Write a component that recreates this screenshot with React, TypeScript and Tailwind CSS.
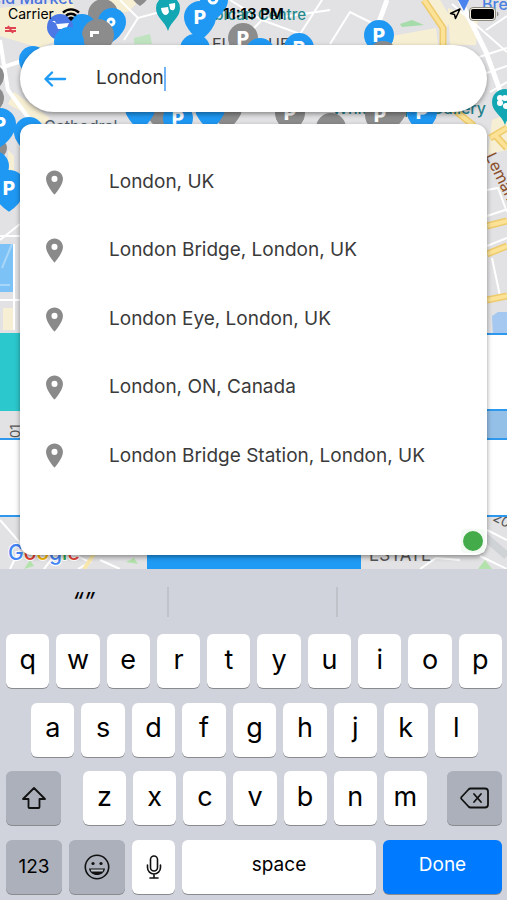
import { useState } from 'react'
import type { ReactNode } from 'react'
import { Navigation } from 'lucide-react'
import { MdPlace } from 'react-icons/md'
import clsx from 'clsx'

const suggestions = [
  'London, UK',
  'London Bridge, London, UK',
  'London Eye, London, UK',
  'London, ON, Canada',
  'London Bridge Station, London, UK',
]

interface PinProps {
  x: number
  y: number
  r?: number
  color?: string
  label?: boolean
}

const BLUE = '#1f98f3'
const GRAY = '#8c8c8c'

function Pin({ x, y, r = 15, color = BLUE, label = false }: PinProps) {
  return (
    <g transform={`translate(${x} ${y})`}>
      <circle r={r} fill={color} />
      <path
        d={`M${-r * 0.92} ${r * 0.4}Q${-r * 0.6} ${r * 1.1} 0 ${r * 1.45}Q${r * 0.6} ${r * 1.1} ${r * 0.92} ${r * 0.4}Z`}
        fill={color}
      />
      {label && (
        <text y={r * 0.45} textAnchor="middle" fontSize="19" fontWeight="800" fill="#fff">
          P
        </text>
      )}
    </g>
  )
}

function MapView() {
  return (
    <svg
      viewBox="0 0 507 569"
      preserveAspectRatio="xMidYMid slice"
      className="absolute inset-0 h-full w-full font-[Inter,sans-serif]"
      aria-hidden="true"
    >
      <rect width="507" height="569" fill="#e2e2e4" />

      {/* blocks */}
      <g fill="#f7efd3">
        <path d="M0 8L72 0L80 30L40 48L0 36Z" />
        <path d="M14 92L50 118L44 124L8 104Z" />
        <path d="M98 0H140L128 12H112Z" />
        <path d="M392 36L436 28L438 46H390Z" />
        <path d="M448 8L478 18L476 45H450Z" />
        <path d="M424 0H440L452 20L446 28Z" />
        <path d="M8 150L14 156V172H8Z" />
        <path d="M3 308H14V330H3Z" />
        <path d="M492 120L507 114V150L488 154Z" />
      </g>
      <path d="M134 38L150 34L152 44H134Z" fill="#bfe3bf" />
      <path d="M400 24L412 20L424 25L402 27Z" fill="#a5dcaa" />
      <path d="M0 244H15V292H0Z" fill="#7dc2f6" />
      <path d="M2 268L12 244M0 285H10" stroke="#a8d6f8" strokeWidth="2" />
      <path d="M492 316L498 312H507V336H493Z" fill="#a4c8f0" />

      {/* streets */}
      <g fill="none" stroke="#fff" strokeWidth="2">
        <path d="M0 40L8 90L30 120M0 68L50 52" strokeWidth="4" />
        <path d="M120 0L138 18L160 12M138 18L124 40M230 0L262 20L330 10M262 20L300 34L322 0M262 20L242 40M330 44L350 12L374 24" />
        <path d="M387 0L376 30" strokeWidth="5" />
        <path d="M460 0L486 52L507 110" strokeWidth="5" />
        <path d="M452 4L507 52M470 60L507 48M478 76L507 66M490 92L507 82M486 30L507 16" />
        <path d="M0 240L20 224M0 236H20M14 244V330M0 300H20" />
        <path d="M487 190L498 188L507 212M487 216L505 210M492 258L500 296M487 246L507 238" />
        <path d="M0 520L22 545L10 569M22 545L40 516M44 569L60 548L90 562L78 569M100 560L120 569M420 569L436 558L460 560M487 530L507 540M480 556L507 569" />
      </g>
      <path d="M484 536L507 556" stroke="#d0d3d6" strokeWidth="8" />
      <g fill="none">
        <path d="M424 0L443 28V46M452 108L474 126M490 138L507 128M494 134L507 148M487 226L507 221M487 254L507 246M487 300L507 296" stroke="#eecb6c" strokeWidth="7" />
        <path d="M424 0L443 28V46M452 108L474 126M490 138L507 128M494 134L507 148M487 226L507 221M487 254L507 246M487 300L507 296" stroke="#fbe297" strokeWidth="4" />
        <path d="M84 569L98 548" stroke="#f8e7ac" strokeWidth="4" />
      </g>
      <path d="M24 569L30 560L34 566ZM478 569L485 560L492 569ZM126 562L134 558L138 564Z" fill="#b4e2ac" />

      {/* labels */}
      <text x="73" y="4" fontSize="16" fontWeight="500" fill="#4a72dc" textAnchor="end">Smithfield Market</text>
      <text x="306" y="20" fontSize="15" fontWeight="500" fill="#23898d" textAnchor="end">Barbican Centre</text>
      <text x="486" y="114" fontSize="16" fontWeight="500" fill="#23808a" textAnchor="end">Whitechapel Gallery</text>
      <text x="482" y="10" fontSize="16" fontWeight="500" fill="#4a80e0">Brewery</text>
      <text x="44" y="132" fontSize="16" fill="#50606e">Cathedral</text>
      <text x="212" y="50" fontSize="16" fill="#444">EL</text>
      <text x="268" y="50" fontSize="16" fill="#444">UE</text>
      <text fontSize="16" fill="#8a4f28" transform="translate(485 156) rotate(64)">Leman St</text>
      <text fontSize="13" fill="#555" transform="translate(20 446) rotate(-90)">201</text>
      <text fontSize="14" fill="#555" transform="translate(492 520) rotate(28)">20</text>
      <text x="369" y="561" fontSize="17" fill="#555">ESTATE</text>
      <path d="M5 28H16M5 31H16M8 26L13 33" stroke="#e14553" strokeWidth="2" fill="none" />

      {/* parking pins */}
      <Pin x={103} y={14} color={GRAY} />
      <Pin x={82} y={29} />
      <Pin x={112} y={22} r={14} />
      <circle cx="111" cy="22" r="3" fill="none" stroke="#fff" strokeWidth="3" />
      <circle cx="60" cy="27" r="13" fill="#4c78e6" />
      <path d="M52 21H55L58 29H66L69 23L57 24Z" fill="#fff" />
      <Pin x={98} y={35} r={16} color={GRAY} />
      <path d="M90 31H99V34H93V37H90Z" fill="#fff" />
      <Pin x={69} y={42} />
      <Pin x={33} y={60} r={14} />
      <Pin x={-8} y={76} color={GRAY} r={12} />
      <Pin x={-8} y={98} color={GRAY} r={12} />
      <Pin x={140} y={-10} color={GRAY} r={11} />
      <Pin x={214} y={0} r={14} />
      <circle cx="213" cy="-1" r="4" fill="none" stroke="#fff" strokeWidth="3" />
      <Pin x={195} y={49} r={15} />
      <Pin x={200} y={17} r={16} label />
      <Pin x={243} y={38} color={GRAY} label />
      <Pin x={260} y={53} />
      <Pin x={299} y={48} label />
      <Pin x={379} y={35} label />
      <Pin x={383} y={56} color={GRAY} />
      <path d="M457 -2H470L464 11Z" fill="#4b83ef" />
      <Pin x={160} y={108} color={GRAY} />
      <Pin x={140} y={108} />
      <Pin x={227} y={108} color={GRAY} />
      <Pin x={210} y={108} />
      <Pin x={178} y={118} label />
      <Pin x={290} y={113} color={GRAY} label />
      <Pin x={331} y={128} color={GRAY} />
      <Pin x={392} y={108} color={GRAY} />
      <Pin x={380} y={115} color={GRAY} label />
      <Pin x={422} y={112} label />
      <Pin x={-2} y={148} r={9} color={GRAY} />
      <Pin x={0} y={124} r={16} label />
      <Pin x={29} y={132} r={15} />
      <Pin x={-6} y={166} />
      <Pin x={9} y={187} r={17} label />

      {/* theatres */}
      <path d="M168 31C165 21 156 18 156 8A12 12 0 0 1 180 8C180 18 171 21 168 31Z" fill="#13a6b3" />
      <path d="M161 8L168 7L169 12C167 17 162 16 161 8ZM169 4L175 3C176 10 173 12 170 9Z" fill="#fff" />
      <path d="M505 125C502 115 492 112 492 102A13 13 0 0 1 518 102C518 112 508 115 505 125Z" fill="#13a6b3" />
      <g fill="#fff">
        <circle cx="500" cy="98" r="3" />
        <circle cx="505" cy="98" r="3" />
        <circle cx="500" cy="103" r="3" />
        <circle cx="506" cy="106" r="3" />
      </g>

      {/* attribution */}
      <text x="8" y="560" fontSize="21" fontWeight="500" stroke="#fff" strokeWidth="2" paintOrder="stroke">
        <tspan fill="#4285f4">G</tspan>
        <tspan fill="#ea4335">o</tspan>
        <tspan fill="#fbbc05">o</tspan>
        <tspan fill="#4285f4">g</tspan>
        <tspan fill="#34a853">l</tspan>
        <tspan fill="#ea4335">e</tspan>
      </text>
    </svg>
  )
}

// Booking cards that lie between the map and the search sheet
function BackgroundCards() {
  return (
    <div className="absolute inset-0 flex flex-col pt-[333px]" aria-hidden="true">
      <div className="flex h-[78px]">
        <div className="flex-1 bg-[#2bc8cd]" />
        <div className="flex-1 border-y-2 border-[#2d98ee] bg-white" />
      </div>
      <div className="flex h-[27px]">
        <div className="flex-1" />
        <div className="flex-1 bg-[#94bfe6]" />
      </div>
      <div className="h-[79px] border-y-2 border-[#2d98ee] bg-white" />
      <div className="mt-auto ml-[29%] h-9 w-[214px] bg-[#1f9bf5]" />
    </div>
  )
}

function StatusBar() {
  return (
    <header className="relative grid h-7 grid-cols-3 items-center px-2 text-sm text-black">
      <div className="flex items-center gap-2">
        <span>Carrier</span>
        <svg viewBox="0 0 18 13" className="h-[13px] w-[18px]" role="img" aria-label="Wi-Fi">
          <g fill="none" stroke="#000" strokeWidth="2.4">
            <path d="M1 4.6A11.5 11.5 0 0 1 17 4.6" />
            <path d="M4 7.7A7.4 7.4 0 0 1 14 7.7" />
          </g>
          <path d="M9 13L6 9.9A4.4 4.4 0 0 1 12 9.9Z" fill="#000" />
        </svg>
      </div>
      <time className="text-center text-[15px] font-semibold">11:13 PM</time>
      <div className="flex items-center justify-end gap-2">
        <Navigation className="size-3" strokeWidth={3} aria-label="Location in use" />
        <svg viewBox="0 0 30 14" className="h-[14px] w-[30px]" role="img" aria-label="Battery full">
          <rect x="0.5" y="0.5" width="26" height="13" rx="3.5" fill="#f4f0e4" stroke="#8d8a82" />
          <rect x="2" y="2" width="23" height="10" rx="2" fill="#000" />
          <path d="M28 4.5C30 5.5 30 8.5 28 9.5Z" fill="#8d8a82" />
        </svg>
      </div>
    </header>
  )
}

interface SearchBarProps {
  value: string
  onChange: (value: string) => void
}

function SearchBar({ value, onChange }: SearchBarProps) {
  return (
    <form
      onSubmit={(e) => e.preventDefault()}
      className="flex h-[67px] items-center rounded-full bg-white pl-6 shadow-[0_2px_5px_rgba(0,0,0,0.4)]"
    >
      <button type="button" aria-label="Back" className="text-[#1f9bf5]">
        <svg viewBox="0 0 24 24" className="size-6" fill="none" stroke="currentColor" strokeWidth="2.4" strokeLinecap="round" strokeLinejoin="round">
          <path d="M21 12H2M8 5.5L1.5 12L8 18.5" />
        </svg>
      </button>
      <input
        type="text"
        aria-label="Search location"
        value={value}
        onChange={(e) => onChange(e.target.value)}
        className="ml-7 field-sizing-content text-[19px] text-[#333] caret-transparent outline-none"
      />
      <span className="h-6 w-[2px] bg-[#6fb4f7]" />
    </form>
  )
}

function SuggestionPanel({ onSelect }: { onSelect: (value: string) => void }) {
  return (
    <div className="relative mt-3 flex-1 rounded-xl bg-white pt-6 pb-16 shadow-[0_2px_5px_rgba(0,0,0,0.4)]">
      <ul className="flex h-[342px] flex-col">
        {suggestions.map((name) => (
          <li key={name} className="flex-1">
            <button
              type="button"
              onClick={() => onSelect(name)}
              className="flex h-full w-full items-center gap-10 pl-5 text-left text-[19px] text-[#3a3a3a]"
            >
              <MdPlace className="size-[29px] text-[#8a8a8a]" />
              <span>{name}</span>
            </button>
          </li>
        ))}
      </ul>
      <span className="absolute right-[2px] bottom-[2px] grid size-6 place-items-center rounded bg-[#f3faf3]">
        <span className="size-5 rounded-full bg-[#43ab4a]" />
      </span>
    </div>
  )
}

interface KeyProps {
  children: ReactNode
  label?: string
  className?: string
  onClick?: () => void
}

function Key({ children, label, className = 'flex-1 bg-white pb-1 text-[27px]', onClick }: KeyProps) {
  return (
    <button
      type="button"
      aria-label={label}
      onClick={onClick}
      className={clsx(
        'flex h-[54px] items-center justify-center rounded-md leading-none shadow-[0_1px_0_#898b8f]',
        className,
      )}
    >
      {children}
    </button>
  )
}

function Keyboard({ onType, onDelete }: { onType: (char: string) => void; onDelete: () => void }) {
  const letters = (row: string) =>
    row.split('').map((char) => (
      <Key key={char} onClick={() => onType(char)}>
        {char}
      </Key>
    ))

  return (
    <section aria-label="Keyboard" className="bg-[#d0d3db] pb-[6px] text-black">
      <div className="grid h-[65px] grid-cols-3 items-center divide-x-2 divide-[#bfc2c9]">
        <button type="button" className="h-[30px] text-2xl leading-7 italic">
          “”
        </button>
        <span className="h-[30px]" />
        <span className="h-[30px]" />
      </div>
      <div className="flex h-[260px] flex-col justify-between">
        <div className="flex gap-[7px] pr-[5px] pl-[6px]">{letters('qwertyuiop')}</div>
        <div className="flex gap-[7px] pr-[29px] pl-[31px]">{letters('asdfghjkl')}</div>
        <div className="flex justify-between pr-[5px] pl-[6px]">
          <Key label="Shift" className="w-[55px] bg-[#abb0bb]">
            <svg viewBox="0 0 26 24" className="h-6 w-[26px]" fill="none" stroke="#111" strokeWidth="1.8" strokeLinejoin="round">
              <path d="M13 2L24 13H18.5V21Q18.5 22 17.5 22H8.5Q7.5 22 7.5 21V13H2Z" />
            </svg>
          </Key>
          <div className="mr-5 ml-[22px] flex flex-1 gap-[7px]">{letters('zxcvbnm')}</div>
          <Key label="Delete" onClick={onDelete} className="w-[55px] bg-[#abb0bb]">
            <svg viewBox="0 0 30 22" className="h-[22px] w-[30px]" fill="none" stroke="#111" strokeWidth="1.8" strokeLinecap="round" strokeLinejoin="round">
              <path d="M10.5 1.5H25Q28 1.5 28 4.5V17.5Q28 20.5 25 20.5H10.5Q9.5 20.5 8.5 19.5L1.5 12Q0.8 11 1.5 10L8.5 2.5Q9.5 1.5 10.5 1.5Z" />
              <path d="M14 7L21 15M21 7L14 15" />
            </svg>
          </Key>
        </div>
        <div className="flex gap-[7px] pr-[5px] pl-[6px]">
          <Key className="w-14 bg-[#abb0bb] text-[19px]">123</Key>
          <Key label="Emoji" className="w-14 bg-[#abb0bb]">
            <svg viewBox="0 0 26 26" className="size-[26px]">
              <circle cx="13" cy="13" r="11.7" fill="none" stroke="#111" strokeWidth="1.6" />
              <circle cx="9" cy="9.5" r="1.6" fill="#111" />
              <circle cx="17" cy="9.5" r="1.6" fill="#111" />
              <path d="M5 14.5H21C20.5 18.5 17 21 13 21C9 21 5.5 18.5 5 14.5Z" fill="#111" />
              <path d="M6.6 15.5H19.4L18.6 17.4H7.4Z" fill="#c4c8d0" />
            </svg>
          </Key>
          <Key label="Dictation" className="w-[43px] bg-white">
            <svg viewBox="0 0 16 26" className="h-[26px] w-4" fill="none" stroke="#111" strokeWidth="1.6" strokeLinecap="round">
              <rect x="4.5" y="2" width="7" height="15" rx="3.5" />
              <path d="M1.500 11V13.500A6.500 6.500 0 0 0 14.500 13.500V11M8 20V24M4 24H12" />
            </svg>
          </Key>
          <Key className="flex-1 bg-white pb-1 text-[19px]" onClick={() => onType(' ')}>
            space
          </Key>
          <Key className="w-[119px] bg-[#007aff] pb-1 text-[19px] text-white">Done</Key>
        </div>
      </div>
    </section>
  )
}

export default function App() {
  const [query, setQuery] = useState('London')

  return (
    <div className="flex min-h-screen flex-col bg-[#d0d3db] font-[Inter,sans-serif]">
      <main className="relative flex flex-1 flex-col overflow-hidden">
        <MapView />
        <BackgroundCards />
        <StatusBar />
        <div className="relative mt-[17px] mb-[14px] flex flex-1 flex-col px-5">
          <SearchBar value={query} onChange={setQuery} />
          <SuggestionPanel onSelect={setQuery} />
        </div>
      </main>
      <Keyboard
        onType={(char) => setQuery((q) => q + char)}
        onDelete={() => setQuery((q) => q.slice(0, -1))}
      />
    </div>
  )
}
